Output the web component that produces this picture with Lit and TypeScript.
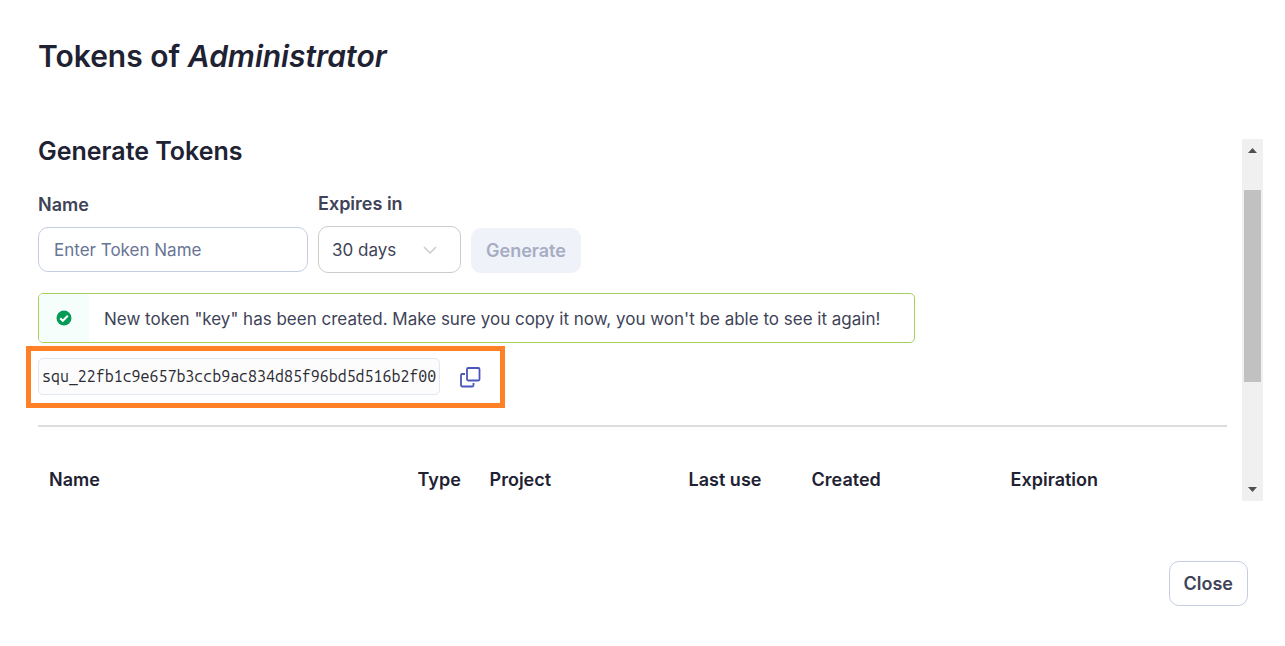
import { LitElement, html, css } from "lit";
import { customElement, property, state } from "lit/decorators.js";

@customElement("app-root")
export class AppRoot extends LitElement {
  static styles = css`
    :host {
      display: block;
      box-sizing: border-box;
      background: #fff;
      color: #3e4357;
      font-family: Inter, "Liberation Sans", sans-serif;
      font-size: 18px;
      line-height: 24px;
    }
    * {
      box-sizing: border-box;
    }
    .dialog {
      display: flex;
      flex-direction: column;
    }
    h1,
    h2 {
      margin: 0;
      color: #1e2233;
      font-weight: 600;
    }
    h1 {
      padding: 36px 38px 0;
      font-size: 30px;
      line-height: 40px;
    }
    h2 {
      font-size: 25px;
      line-height: 24px;
    }
    .body {
      display: flex;
      gap: 15px;
      margin: 63px 22px 0 38px;
    }
    .content {
      flex: 1;
      min-width: 0;
      padding-bottom: 9px;
    }
    .form {
      display: flex;
      align-items: center;
      gap: 10px;
      margin-top: 29px;
    }
    .field {
      display: flex;
      flex-direction: column;
      gap: 10px;
    }
    label,
    .btn {
      font-weight: 600;
    }
    .input,
    .select,
    .btn {
      font-family: inherit;
      font-size: 18px;
      line-height: 24px;
      color: #3e4357;
      background: #fff;
      border: 1px solid #c5cde0;
      border-radius: 10px;
      height: 45px;
      margin: 0;
    }
    .input {
      width: 270px;
      padding: 0 15px;
    }
    .input::placeholder {
      color: #697594;
      opacity: 1;
    }
    .input,
    .select,
    .banner-text {
      font-size: 17px;
    }
    .pick {
      display: grid;
      align-items: center;
    }
    .select {
      grid-area: 1 / 1;
      appearance: none;
      width: 143px;
      height: 47px;
      padding: 0 13px;
      border-color: #ccc;
    }
    .chevron {
      grid-area: 1 / 1;
      justify-self: end;
      margin-right: 24px;
      pointer-events: none;
    }
    .btn {
      padding: 0 14px;
    }
    .form .btn {
      align-self: flex-end;
    }
    .btn:disabled {
      color: #a6adc2;
      background: #eff2f9;
      border-color: #eff2f9;
    }
    .banner {
      display: flex;
      width: fit-content;
      margin-top: 20px;
      min-height: 50px;
      border: 1px solid #a6d05c;
      border-radius: 5px;
      overflow: hidden;
    }
    .banner-icon {
      display: flex;
      align-items: center;
      justify-content: center;
      width: 50px;
      background: #f5fefa;
    }
    .banner-text {
      margin: 0;
      padding: 13px 34px 11px 15px;
    }
    .token-row {
      position: relative;
      display: flex;
      align-items: center;
      gap: 19px;
      width: 462px;
      margin-top: 15px;
    }
    .highlight {
      position: absolute;
      inset: -12px -5px -13px -12px;
      border: 5px solid #ff8026;
      pointer-events: none;
    }
    .token {
      display: block;
      width: 402px;
      padding: 0 3px;
      border: 1px solid #e1e6f3;
      border-radius: 5px;
      background: #fcfcfd;
      color: #2c2c34;
      font-family: "Ubuntu Mono", "DejaVu Sans Mono", monospace;
      font-size: 16px;
      line-height: 35px;
      white-space: nowrap;
    }
    .copy {
      display: flex;
      margin: 0;
      padding: 0;
      border: 0;
      background: none;
      color: #4b56bb;
    }
    hr {
      margin: 30px 0 0;
      border: 0;
      height: 2px;
      background: #ddd;
    }
    table {
      width: 100%;
      margin-top: 41px;
      table-layout: fixed;
      border-collapse: collapse;
    }
    th {
      padding: 0 0 0 11px;
      text-align: left;
      font-weight: 600;
      color: #1e2233;
      white-space: nowrap;
    }
    .c-name {
      width: 31%;
    }
    .c-type {
      width: 72px;
    }
    .c-mid {
      width: 199px;
    }
    .c-last {
      width: 123px;
    }
    .scroll {
      display: flex;
      flex-direction: column;
      align-items: center;
      justify-content: space-between;
      width: 21px;
      padding: 9px 0;
      background: #f0f0f0;
    }
    .thumb {
      width: 17px;
      height: 192px;
      margin-bottom: 68px;
      background: #c1c1c1;
    }
    footer {
      display: flex;
      justify-content: flex-end;
      padding: 60px 37px 40px;
    }
  `;

  @property() user = "Administrator";
  @state() private name = "";
  private token = "squ_22fb1c9e657b3ccb9ac834d85f96bd5d516b2f00";

  render() {
    return html`
      <div class="dialog">
        <h1>Tokens of <em>${this.user}</em></h1>
        <div class="body">
          <div class="content">
            <h2>Generate Tokens</h2>
            <div class="form">
              <div class="field">
                <label for="name">Name</label>
                <input
                  id="name"
                  class="input"
                  type="text"
                  placeholder="Enter Token Name"
                  .value=${this.name}
                  @input=${(e: Event) => (this.name = (e.target as HTMLInputElement).value)}
                />
              </div>
              <div class="field">
                <label for="expires">Expires in</label>
                <div class="pick">
                  <select id="expires" class="select">
                    <option>30 days</option>
                    <option>90 days</option>
                    <option>1 year</option>
                    <option>No expiration</option>
                  </select>
                  <svg class="chevron" width="14" height="8" viewBox="0 0 14 8" fill="none" stroke="#ccc" stroke-width="1.5">
                    <path d="M1 1l6 6 6-6" />
                  </svg>
                </div>
              </div>
              <button class="btn" ?disabled=${!this.name}>Generate</button>
            </div>
            <div class="banner" role="status">
              <span class="banner-icon">
                <svg width="16" height="16" viewBox="0 0 16 16" fill="none">
                  <circle cx="8" cy="8" r="7.5" fill="#069a57" />
                  <path d="M4.2 8.2l2.6 2.6 5-5" stroke="#fff" stroke-width="2" />
                </svg>
              </span>
              <p class="banner-text">
                New token "key" has been created. Make sure you copy it now, you won't be able to see it again!
              </p>
            </div>
            <div class="token-row">
              <code class="token">${this.token}</code>
              <button class="copy" aria-label="Copy to clipboard">
                <svg width="22" height="22" viewBox="0 0 22 22" fill="none" stroke="currentColor" stroke-width="1.8">
                  <rect x="8" y="2" width="12.5" height="12.5" rx="1.2" />
                  <path d="M6 8H3.2A1.2 1.2 0 0 0 2 9.2v10.1a1.2 1.2 0 0 0 1.2 1.2h10.1a1.2 1.2 0 0 0 1.2-1.2V17" />
                </svg>
              </button>
              <div class="highlight"></div>
            </div>
            <hr />
            <table>
              <colgroup>
                <col class="c-name" />
                <col class="c-type" />
                <col class="c-mid" />
                <col class="c-last" />
                <col class="c-mid" />
                <col />
              </colgroup>
              <thead>
                <tr>
                  ${["Name", "Type", "Project", "Last use", "Created", "Expiration"].map(
                    (t) => html`<th scope="col">${t}</th>`
                  )}
                </tr>
              </thead>
            </table>
          </div>
          <div class="scroll" aria-hidden="true">
            <svg width="9" height="5" viewBox="0 0 9 5"><path d="M0 5L4.5 0L9 5z" fill="#505050" /></svg>
            <div class="thumb"></div>
            <svg width="9" height="5" viewBox="0 0 9 5"><path d="M0 0L4.5 5L9 0z" fill="#505050" /></svg>
          </div>
        </div>
        <footer><button class="btn">Close</button></footer>
      </div>
    `;
  }
}
